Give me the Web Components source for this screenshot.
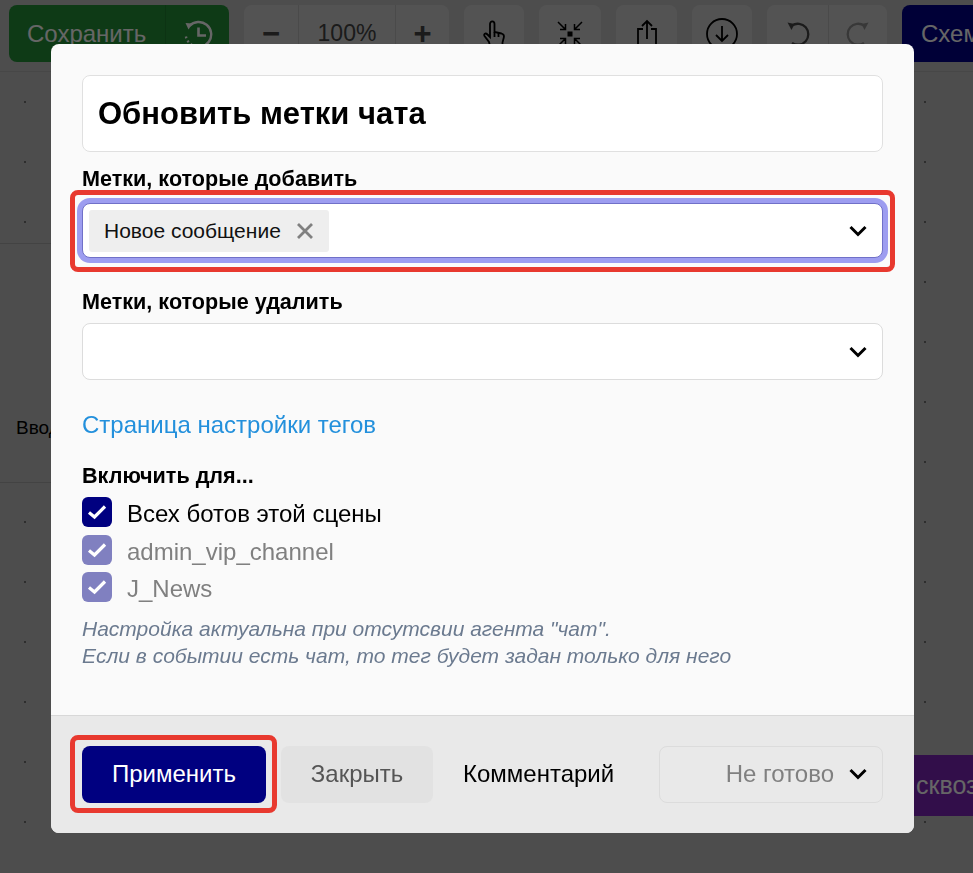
<!DOCTYPE html>
<html lang="ru">
  <head>
    <meta charset="UTF-8" />
    <title>Обновить метки чата</title>
    <style>
      html, body { margin: 0; height: 100%; }
      body { font-family: "Liberation Sans", Arial, sans-serif; overflow: hidden; }
    </style>
  </head>
  <body>
    <flow-editor>
      <editor-toolbar slot="top"></editor-toolbar>
    </flow-editor>
    <modal-backdrop>
      <labels-dialog></labels-dialog>
    </modal-backdrop>

    <script>
      const ICONS = {
        chevron: '<svg width="18" height="12" viewBox="0 0 18 12"><path d="M1.500 2L9 9.500 16.500 2" fill="none" stroke="currentColor" stroke-width="3"/></svg>',
        close: '<svg width="18" height="18" viewBox="0 0 18 18"><path d="M2 2l14 14M16 2L2 16" fill="none" stroke="currentColor" stroke-width="2.8"/></svg>',
        check: '<svg width="20" height="20" viewBox="0 0 20 20"><path d="M2 10.500L7.500 15 18 4.500" fill="none" stroke="#fff" stroke-width="3.200"/></svg>',
      };

      const TOOL_ICONS = {
        history: '<svg width="30" height="30" viewBox="0 0 30 30" fill="none" stroke="currentColor" stroke-width="2.400"><path d="M6.500 7A12.500 12.500 0 1 1 9 26"/><path d="M9 26A12.500 12.500 0 0 1 2.700 15" stroke-dasharray="1.800 2.600"/><path d="M2.500 4l7 .5-4 6z" fill="currentColor" stroke="none"/><path d="M15.500 8.500v8h7.500" stroke-width="2.600"/></svg>',
        hand: '<svg width="24" height="28" viewBox="0 0 24 28" fill="none" stroke="currentColor" stroke-width="1.800"><path d="M8 26l-1-4-4.500-6c-1.200-2 1-3.500 3-1.500L8 17V4c0-3.500 4.500-3.500 4.500 0v8l7 1.500c2 .5 2.800 2 2.300 4l-1.300 5v4z"/><path d="M12.500 12v5M16.500 13v4"/></svg>',
        fit: '<svg width="28" height="28" viewBox="0 0 28 28" fill="none" stroke="currentColor" stroke-width="1.500"><rect x="11.500" y="11.500" width="5" height="5" fill="currentColor" stroke="none"/><path d="M2 2l7 7M9.500 4v5.500H4M26 2l-7 7M18.500 4v5.500H24M2 26l7-7M9.500 24v-5.500H4M26 26l-7-7M18.500 24v-5.500H24"/></svg>',
        share: '<svg width="22" height="32" viewBox="0 0 22 32" fill="none" stroke="currentColor" stroke-width="1.800"><path d="M7 11H2v19h18V11h-5M11 21V3M6 8l5-5 5 5"/></svg>',
        download: '<svg width="32" height="32" viewBox="0 0 32 32" fill="none" stroke="currentColor" stroke-width="1.800"><circle cx="16" cy="16" r="15"/><path d="M16 8v15M10 17l6 6 6-6"/></svg>',
        undo: '<svg width="26" height="26" viewBox="0 0 26 26" fill="none" stroke="currentColor" stroke-width="2.300"><path d="M7 4.500A10.500 10.500 0 1 1 7 22"/><path d="M2.500 1.500l7 1.500-3 6" fill="currentColor" stroke="none"/></svg>',
        redo: '<svg width="26" height="26" viewBox="0 0 26 26" fill="none" stroke="currentColor" stroke-width="2.300"><path d="M19 4.500A10.500 10.500 0 1 0 19 22"/><path d="M23.500 1.500l-7 1.500 3 6" fill="currentColor" stroke="none"/></svg>',
      };

      // Кнопка панели инструментов
      class ToolButton extends HTMLElement {
        connectedCallback() {
          const icon = this.getAttribute("icon");
          this.attachShadow({ mode: "open" }).innerHTML = `
            <style>
              :host {
                display: flex; flex: none; align-items: center; justify-content: center;
                height: 57px; background: #d0d0d0; color: #000; box-sizing: border-box;
                font-size: 24px; border-radius: 8px; white-space: nowrap;
              }
              :host([joined]) { border-radius: 0; color: #444; }
              :host([faded]) { color: #8c8c8c; }
              svg { display: block; }
            </style>
            ${icon ? TOOL_ICONS[icon] : "<slot></slot>"}`;
        }
      }

      class EditorToolbar extends HTMLElement {
        connectedCallback() {
          this.attachShadow({ mode: "open" }).innerHTML = `
            <style>
              :host {
                display: flex; gap: 15px; height: 72px; padding: 5px 0 0 9px;
                box-sizing: border-box; border-bottom: 1px solid #b2b2b2;
                white-space: nowrap; overflow: hidden;
              }
              .group { display: flex; height: 57px; border-radius: 8px; overflow: hidden; flex: none; }
              .group > * + * { border-left: 1px solid #b8b8b8; }
              .save { background: #239137; color: #fff; font-size: 24px; }
              .save span { width: 156px; box-sizing: border-box; padding-left: 18px; line-height: 57px; }
              .save div {
                width: 63px; display: flex; align-items: center; justify-content: center;
                border-left: 1px solid #1f8131;
              }
              .scheme {
                background: #000089; color: #fff; font-size: 24px; height: 57px; padding-left: 19px;
                line-height: 57px; width: 140px; border-radius: 8px; flex: none; box-sizing: border-box;
              }
              .sign { font-weight: bold; }
            </style>
            <div class="group save"><span>Сохранить</span><div>${TOOL_ICONS.history}</div></div>
            <div class="group">
              <tool-button joined class="sign" style="width:54px;font-size:31px">−</tool-button>
              <tool-button joined style="width:97px;font-size:23px">100%</tool-button>
              <tool-button joined class="sign" style="width:54px;font-size:31px">+</tool-button>
            </div>
            <tool-button icon="hand" style="width:60px"></tool-button>
            <tool-button icon="fit" style="width:62px"></tool-button>
            <tool-button icon="share" style="width:61px"></tool-button>
            <tool-button icon="download" style="width:60px"></tool-button>
            <div class="group">
              <tool-button joined icon="undo" style="width:61px"></tool-button>
              <tool-button joined faded icon="redo" style="width:59px"></tool-button>
            </div>
            <div class="scheme">Схема</div>`;
        }
      }

      class FlowEditor extends HTMLElement {
        connectedCallback() {
          this.attachShadow({ mode: "open" }).innerHTML = `
            <style>
              :host { display: flex; flex-direction: column; height: 873px; background: #c0c0c0; }
              .canvas {
                flex: 1; position: relative; overflow: hidden;
                background-image: radial-gradient(circle at center, #707070 1.2px, transparent 1.3px);
                background-size: 60px 60px; background-position: -5px 0;
              }
              .node { position: absolute; box-sizing: border-box; }
              .input {
                left: -10px; top: 171px; width: 300px; height: 240px; background: #c0c0c0;
                border: 1px solid #a8a8a8; padding: 172px 0 0 25px;
                font-size: 19px; line-height: 24px; color: #000;
              }
              .through {
                left: 860px; top: 683px; width: 160px; height: 61px; background: #7d23b9; color: #fff;
                font-size: 25px; line-height: 61px; padding-left: 56px; white-space: nowrap;
              }
            </style>
            <slot name="top"></slot>
            <div class="canvas">
              <div class="node input">Ввод</div>
              <div class="node through">сквозной</div>
            </div>`;
        }
      }

      class ModalBackdrop extends HTMLElement {
        connectedCallback() {
          this.attachShadow({ mode: "open" }).innerHTML = `
            <style>
              :host {
                position: fixed; inset: 0; background: rgba(0, 0, 0, 0.6);
                display: flex; justify-content: center; align-items: flex-start;
                padding: 44px 59px 0 51px;
              }
            </style>
            <slot></slot>`;
        }
      }

      // Поле выбора с тегами
      class TagSelect extends HTMLElement {
        connectedCallback() {
          this.attachShadow({ mode: "open" }).innerHTML = `
            <style>
              :host {
                display: flex; align-items: center; height: 57px; box-sizing: border-box;
                background: #fff; border: 1px solid #dcdcdc; border-radius: 8px;
                padding: 0 15px 0 6px; color: #000;
              }
              :host([focused]) {
                height: 55px; border-color: #7070c8; box-shadow: 0 0 0 5px #9d9df0;
              }
              .grow { flex: 1; display: flex; }
              svg { display: block; }
            </style>
            <div class="grow"><slot></slot></div>
            ${ICONS.chevron}`;
        }
      }

      class TagChip extends HTMLElement {
        connectedCallback() {
          this.attachShadow({ mode: "open" }).innerHTML = `
            <style>
              :host {
                display: flex; align-items: center; gap: 15px; height: 42px;
                background: #eee; border-radius: 3px; padding: 0 15px;
                font-size: 21px; color: #111;
              }
              span { display: flex; color: #808080; }
            </style>
            <slot></slot><span>${ICONS.close}</span>`;
        }
      }

      class CheckRow extends HTMLElement {
        connectedCallback() {
          this.attachShadow({ mode: "open" }).innerHTML = `
            <style>
              :host {
                display: flex; align-items: center; gap: 15px; height: 30px;
                font-size: 24px; color: #000;
              }
              :host([disabled]) { color: #808080; }
              .box {
                width: 30px; height: 30px; border-radius: 6px; background: #000080;
                display: flex; align-items: center; justify-content: center;
              }
              :host([disabled]) .box { background: #8080c0; }
              .text { padding-top: 4px; }
            </style>
            <div class="box">${ICONS.check}</div><div class="text"><slot></slot></div>`;
        }
      }

      class LabelsDialog extends HTMLElement {
        connectedCallback() {
          this.attachShadow({ mode: "open" }).innerHTML = `
            <style>
              :host {
                display: flex; flex-direction: column; width: 863px; height: 789px;
                border-radius: 8px; overflow: hidden; background: #fafafa; color: #000;
              }
              .body { flex: 1; padding: 31px 31px 0; box-sizing: border-box; }
              .title {
                height: 77px; box-sizing: border-box; background: #fff; border: 1px solid #e0e0e0;
                border-radius: 8px; font-size: 31px; font-weight: bold; display: flex;
                align-items: center; padding-left: 15px;
              }
              .label { font-size: 21.600px; font-weight: bold; line-height: 24px; }
              .l1 { margin-top: 15px; margin-bottom: 12px; }
              .l2 { margin-top: 32px; margin-bottom: 9px; }
              .marked { position: relative; }
              .marked::after {
                content: ""; position: absolute; inset: -13px -12px -14px; border: 5px solid #e8392f;
                border-radius: 8px; pointer-events: none;
              }
              .footer .marked::after { inset: -11px -11px -10px -12px; }
              .link { display: block; margin-top: 31px; font-size: 24px; line-height: 28px; color: #2390dc; text-decoration: none; }
              .l3 { margin-top: 25px; margin-bottom: 9px; }
              .checks { display: flex; flex-direction: column; gap: 7.500px; }
              .hint {
                margin-top: 13px; font-size: 21px; line-height: 27px;
                font-style: italic; color: #6b7a8f; white-space: nowrap;
              }
              .footer {
                height: 118px; box-sizing: border-box; background: #e9e9e9; border-top: 1px solid #d8d8d8;
                padding: 30px 31px 0; display: flex; gap: 15px; align-items: flex-start;
              }
              .btn {
                flex: none; height: 57px; border-radius: 8px; font-size: 24px; display: flex;
                align-items: center; justify-content: center; box-sizing: border-box; padding-bottom: 2px;
              }
              .apply { width: 184px; background: #000080; color: #fff; }
              .close { width: 152px; background: #e2e2e2; color: #555; }
              .comment { width: 181px; margin-left: 15px; justify-content: flex-start; color: #000; }
              .ready {
                width: 224px; border: 1px solid #dcdcdc; justify-content: flex-end;
                gap: 15px; padding-right: 15px; color: #808080;
              }
              .ready svg { color: #000; }
            </style>
            <div class="body">
              <div class="title">Обновить метки чата</div>
              <div class="label l1">Метки, которые добавить</div>
              <div class="marked">
                <tag-select focused><tag-chip>Новое сообщение</tag-chip></tag-select>
              </div>
              <div class="label l2">Метки, которые удалить</div>
              <tag-select></tag-select>
              <a class="link" href="#">Страница настройки тегов</a>
              <div class="label l3">Включить для...</div>
              <div class="checks">
                <check-row>Всех ботов этой сцены</check-row>
                <check-row disabled>admin_vip_channel</check-row>
                <check-row disabled>J_News</check-row>
              </div>
              <div class="hint">Настройка актуальна при отсутсвии агента "чат".<br />Если в событии есть чат, то тег будет задан только для него</div>
            </div>
            <div class="footer">
              <div class="marked"><div class="btn apply">Применить</div></div>
              <div class="btn close">Закрыть</div>
              <div class="btn comment">Комментарий</div>
              <div class="btn ready">Не готово ${ICONS.chevron}</div>
            </div>`;
        }
      }

      customElements.define("tool-button", ToolButton);
      customElements.define("editor-toolbar", EditorToolbar);
      customElements.define("flow-editor", FlowEditor);
      customElements.define("modal-backdrop", ModalBackdrop);
      customElements.define("tag-select", TagSelect);
      customElements.define("tag-chip", TagChip);
      customElements.define("check-row", CheckRow);
      customElements.define("labels-dialog", LabelsDialog);
    </script>
  </body>
</html>
